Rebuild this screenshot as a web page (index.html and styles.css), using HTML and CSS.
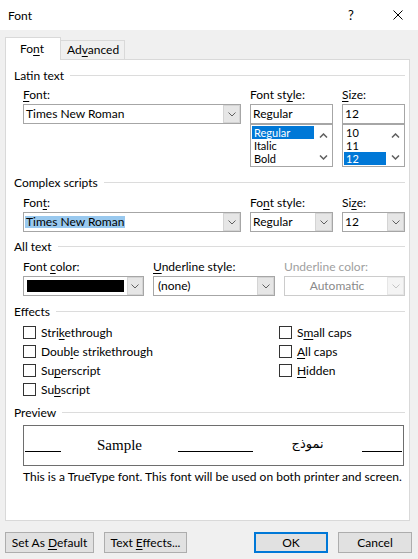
FILE: index.html
```html
<!DOCTYPE html>
<html lang="en">
<head>
<meta charset="utf-8">
<title>Font</title>
<link rel="stylesheet" href="styles.css">
</head>
<body>
<div class="window">
  <header class="titlebar">
    <span class="title">Font</span>
    <span class="help">?</span>
    <span class="close"><svg width="10" height="10" viewBox="0 0 10 10"><path d="M0.5 0.5L9.5 9.5M9.5 0.5L0.5 9.5" stroke="#000" stroke-width="1" fill="none"/></svg></span>
  </header>
  <div class="main">
    <div class="tabs">
      <div class="tab active">Fo<u>n</u>t</div>
      <div class="tab">Ad<u>v</u>anced</div>
      <div class="tab-fill"></div>
    </div>
    <div class="panel">
      <div class="ghead"><span>Latin text</span><i></i></div>
      <div class="row3 r-latin">
        <div class="field">
          <div class="lbl"><u>F</u>ont:</div>
          <div class="combo"><span class="val">Times New Roman</span><span class="drop"><svg width="8" height="5" viewBox="0 0 8 5"><path d="M0.5 0.5L4 4L7.5 0.5" fill="none" stroke="#606060"/></svg></span></div>
        </div>
        <div class="field">
          <div class="lbl">Font st<u>y</u>le:</div>
          <div class="combo"><span class="val">Regular</span></div>
          <div class="list">
            <div class="items"><div class="item sel">Regular</div><div class="item">Italic</div><div class="item">Bold</div></div>
            <div class="sb">
              <svg width="9" height="5" viewBox="0 0 9 5"><path d="M1 4.5L4.5 1L8 4.5" fill="none" stroke="#606060" stroke-width="1.5"/></svg>
              <svg width="9" height="5" viewBox="0 0 9 5"><path d="M1 0.5L4.5 4L8 0.5" fill="none" stroke="#606060" stroke-width="1.5"/></svg>
            </div>
          </div>
        </div>
        <div class="field">
          <div class="lbl"><u>S</u>ize:</div>
          <div class="combo"><span class="val">12</span></div>
          <div class="list">
            <div class="items"><div class="item">10</div><div class="item">11</div><div class="item sel">12</div></div>
            <div class="sb">
              <svg width="9" height="5" viewBox="0 0 9 5"><path d="M1 4.5L4.5 1L8 4.5" fill="none" stroke="#606060" stroke-width="1.5"/></svg>
              <svg width="9" height="5" viewBox="0 0 9 5"><path d="M1 0.5L4.5 4L8 0.5" fill="none" stroke="#606060" stroke-width="1.5"/></svg>
            </div>
          </div>
        </div>
      </div>

      <div class="ghead g-complex"><span>Complex scripts</span><i></i></div>
      <div class="row3 r-complex">
        <div class="field">
          <div class="lbl">Fon<u>t</u>:</div>
          <div class="combo"><span class="val"><span class="hl">Times New Roman</span></span><span class="drop"><svg width="8" height="5" viewBox="0 0 8 5"><path d="M0.5 0.5L4 4L7.5 0.5" fill="none" stroke="#606060"/></svg></span></div>
        </div>
        <div class="field">
          <div class="lbl">Fo<u>n</u>t style:</div>
          <div class="combo"><span class="val">Regular</span><span class="drop"><svg width="8" height="5" viewBox="0 0 8 5"><path d="M0.5 0.5L4 4L7.5 0.5" fill="none" stroke="#606060"/></svg></span></div>
        </div>
        <div class="field">
          <div class="lbl">Si<u>z</u>e:</div>
          <div class="combo"><span class="val">12</span><span class="drop"><svg width="8" height="5" viewBox="0 0 8 5"><path d="M0.5 0.5L4 4L7.5 0.5" fill="none" stroke="#606060"/></svg></span></div>
        </div>
      </div>

      <div class="ghead g-all"><span>All text</span><i></i></div>
      <div class="row-all">
        <div class="field">
          <div class="lbl">Font <u>c</u>olor:</div>
          <div class="combo"><span class="swatch"></span><span class="drop"><svg width="8" height="5" viewBox="0 0 8 5"><path d="M0.5 0.5L4 4L7.5 0.5" fill="none" stroke="#606060"/></svg></span></div>
        </div>
        <div class="field">
          <div class="lbl"><u>U</u>nderline style:</div>
          <div class="combo"><span class="val v-list">(none)</span><span class="drop"><svg width="8" height="5" viewBox="0 0 8 5"><path d="M0.5 0.5L4 4L7.5 0.5" fill="none" stroke="#606060"/></svg></span></div>
        </div>
        <div class="field disabled">
          <div class="lbl">Underline color:</div>
          <div class="combo"><span class="val v-center">Automatic</span><span class="drop"><svg width="8" height="5" viewBox="0 0 8 5"><path d="M0.5 0.5L4 4L7.5 0.5" fill="none" stroke="#c4c4c4"/></svg></span></div>
        </div>
      </div>

      <div class="ghead g-effects"><span>Effects</span><i></i></div>
      <div class="effects">
        <div class="ecol ecol-left">
          <div class="chk"><span class="box"></span><span>Stri<u>k</u>ethrough</span></div>
          <div class="chk"><span class="box"></span><span>Doub<u>l</u>e strikethrough</span></div>
          <div class="chk"><span class="box"></span><span>Su<u>p</u>erscript</span></div>
          <div class="chk"><span class="box"></span><span>Su<u>b</u>script</span></div>
        </div>
        <div class="ecol">
          <div class="chk"><span class="box"></span><span>S<u>m</u>all caps</span></div>
          <div class="chk"><span class="box"></span><span><u>A</u>ll caps</span></div>
          <div class="chk"><span class="box"></span><span><u>H</u>idden</span></div>
        </div>
      </div>

      <div class="ghead g-preview"><span>Preview</span><i></i></div>
      <div class="preview">
        <span class="pline pl1"></span>
        <span class="ptext sample">Sample</span>
        <span class="pline pl2"></span>
        <span class="ptext arabic" dir="rtl" lang="ar">نموذج</span>
        <span class="pline pl3"></span>
      </div>
      <div class="note">This is a TrueType font. This font will be used on both printer and screen.</div>
    </div>

    <div class="buttons">
      <button class="btn b-default">Set As <u>D</u>efault</button>
      <button class="btn b-effects">Text <u>E</u>ffects...</button>
      <button class="btn b-ok">OK</button>
      <button class="btn b-cancel">Cancel</button>
    </div>
  </div>
</div>
</body>
</html>
```

FILE: styles.css
```css
* { box-sizing: border-box; }
html, body { margin: 0; padding: 0; }
body {
  width: 418px;
  height: 559px;
  overflow: hidden;
  background: #f0f0f0;
  font-family: Lato, "Noto Sans", sans-serif;
  font-size: 12px;
  color: #000;
}
u { text-decoration: underline; text-decoration-thickness: 1px; text-underline-offset: 2px; }

.window { width: 418px; height: 559px; display: flex; flex-direction: column; }

.titlebar {
  flex: none;
  height: 30px;
  background: #fff;
  display: flex;
  align-items: center;
  padding-left: 8px;
}
.title { flex: 1; }
.help { width: 20px; text-align: center; margin-right: 32px; font-size: 13px; }
.close { width: 10px; height: 10px; margin-right: 15px; display: flex; }

.main { flex: 1; display: flex; flex-direction: column; padding: 7px 0 0 5px; }

.tabs { display: flex; align-items: flex-end; height: 23px; width: 405px; }
.tab {
  height: 20px;
  width: 64px;
  border: 1px solid #d9d9d9;
  border-left: none;
  background: #f0f0f0;
  padding-left: 6px;
  line-height: 18px;
}
.tab.active {
  height: 23px;
  width: 56px;
  border-left: 1px solid #d9d9d9;
  border-bottom: none;
  background: #fff;
  padding-left: 14px;
  line-height: 22px;
}
.tab-fill { flex: 1; height: 1px; background: #d9d9d9; }

.panel {
  width: 405px;
  height: 461px;
  background: #fff;
  border: 1px solid #d9d9d9;
  border-top: none;
  padding: 8px 4px 0 8px;
  display: flex;
  flex-direction: column;
}

.ghead { display: flex; align-items: center; height: 15px; line-height: 15px; }
.ghead i { flex: 1; height: 1px; background: #dcdcdc; margin-left: 6px; }
.g-complex { margin-top: 8px; }
.g-all { margin-top: 7px; }
.g-effects { margin-top: 8px; }
.g-preview { margin-top: 6px; }

.row3 { display: grid; grid-template-columns: 218px 83px 63px; column-gap: 9px; margin-left: 9px; }
.row-all { display: grid; grid-template-columns: 121px 122px 121px; column-gap: 9px; margin-left: 9px; margin-top: 6px; }
.r-latin { margin-top: 5px; }
.r-complex { margin-top: 6px; }

.field { display: flex; flex-direction: column; }
.lbl { height: 16px; line-height: 14px; white-space: nowrap; }

.combo {
  height: 20px;
  border: 1px solid #a6a6a6;
  background: #fff;
  display: flex;
  align-items: stretch;
}
.val { flex: 1; padding-left: 2px; line-height: 18px; white-space: nowrap; overflow: hidden; }
.v-list { padding-left: 4px; }
.v-center { text-align: center; }
.hl { display: inline-block; background: #99c9ef; line-height: 12px; padding: 0 1px; margin-left: -1px; }
.drop {
  width: 17px;
  flex: none;
  background: #e6e6e6;
  border: 1px solid #d4d4d4;
  display: flex;
  align-items: center;
  justify-content: center;
}
.swatch { width: 97px; height: 12px; background: #000; margin: 3px 3px 0 3px; }
.row-all .field:first-child .drop { width: 16px; }

.disabled .lbl { color: #a0a0a0; }
.disabled .combo { border-color: #cccccc; color: #8a8a8a; }
.disabled .drop { background: #f4f4f4; border-color: #e6e6e6; }

.list {
  height: 43px;
  border: 1px solid #a6a6a6;
  padding: 1px 0 1px 1px;
  display: flex;
}
.items { flex: 1; }
.item { height: 13px; line-height: 13px; padding-left: 2px; font-size: 11px; }
.item.sel { background: #0078d7; color: #fff; }
.sb {
  width: 17px;
  margin-left: 1px;
  display: flex;
  flex-direction: column;
  align-items: center;
  justify-content: space-between;
  padding: 7px 0 5px;
}
.sb svg { display: block; }

.effects { display: flex; margin-left: 9px; margin-top: 4px; }
.ecol { display: flex; flex-direction: column; }
.ecol-left { width: 256px; }
.chk { height: 19px; display: flex; align-items: center; white-space: nowrap; }
.box { width: 13px; height: 13px; border: 1px solid #333; background: #fff; margin-right: 5px; flex: none; }

.preview {
  margin: 5px 0 0 9px;
  width: 381px;
  height: 41px;
  border: 1px solid #6e6e6e;
  display: flex;
  align-items: flex-start;
}
.pline { height: 26px; border-bottom: 1px solid #000; flex: none; }
.pl1 { width: 36px; margin-left: 1px; }
.pl2 { width: 75px; }
.pl3 { width: 40px; }
.ptext { flex: none; text-align: center; white-space: nowrap; }
.sample { width: 117px; font-family: "Liberation Serif", serif; font-size: 15px; line-height: 17px; margin-top: 11px; }
.arabic { width: 109px; font-family: "DejaVu Sans", sans-serif; font-size: 13px; line-height: 17px; margin-top: 9px; }

.note { margin: 3px 0 0 9px; line-height: 15px; white-space: nowrap; }

.buttons { display: flex; margin-top: 11px; height: 21px; }
.btn {
  height: 21px;
  border: 1px solid #adadad;
  background: #e1e1e1;
  font: inherit;
  color: #000;
  padding: 0;
  line-height: 19px;
  text-align: center;
}
.b-default { width: 89px; }
.b-effects { width: 83px; margin-left: 10px; }
.b-ok { width: 74px; margin-left: auto; border: 2px solid #0078d7; line-height: 17px; }
.b-cancel { width: 74px; margin-left: 10px; margin-right: 6px; }
```
